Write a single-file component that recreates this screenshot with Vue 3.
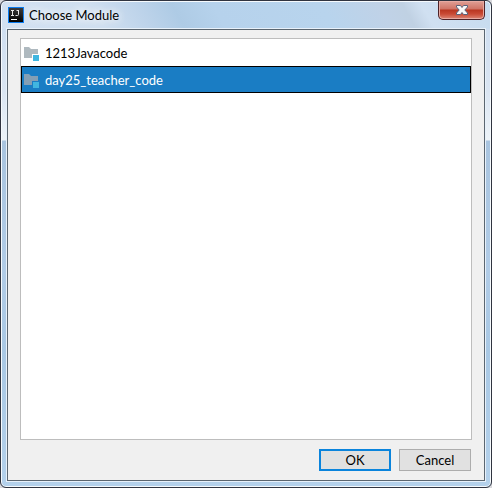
<script setup>
import { ref } from 'vue'

const modules = ['1213Javacode', 'day25_teacher_code']
const selected = ref('day25_teacher_code')
</script>

<template>
  <div class="window" role="dialog" aria-labelledby="dialog-title">
    <header class="titlebar">
      <svg class="app-icon" viewBox="0 0 16 16" aria-hidden="true">
        <defs>
          <linearGradient id="app-bg" x1="0" y1="0" x2="0" y2="1">
            <stop offset="0" stop-color="#3a3a3a" />
            <stop offset="1" stop-color="#000" />
          </linearGradient>
        </defs>
        <rect width="16" height="16" fill="#0a7cf0" />
        <rect x="1" y="1" width="14" height="14" fill="url(#app-bg)" />
        <path d="M3 3.5h3M4.500 3v5M3 8.500h3M8.500 3.500h2M10.500 3v4.500q0 1-1 1H7.500" fill="none" stroke="#e8e8e8" stroke-width="1" />
        <path d="M3 12h6v1H3z" fill="#fff" />
      </svg>
      <h1 id="dialog-title" class="title">Choose Module</h1>
      <button class="close" type="button" aria-label="Close">
        <svg viewBox="0 0 14 12" aria-hidden="true">
          <path d="M1.500 1.500h4L7 3.500l1.500-2h4v1.500L9.800 6l2.700 3v1.500h-4L7 8.500l-1.500 2h-4V9L4.200 6 1.500 3z" fill="#f8f8f8" stroke="#59627a" stroke-width="1" />
        </svg>
      </button>
    </header>

    <main class="client">
      <ul class="list" role="listbox" aria-label="Modules">
        <li
          v-for="name in modules"
          :key="name"
          class="row"
          :class="{ selected: name === selected }"
          role="option"
          :aria-selected="name === selected"
          @click="selected = name"
        >
          <svg class="folder" viewBox="0 0 16 16" aria-hidden="true">
            <path class="folder-body" d="M1 2h5l2 2h7v5H9v4H1z" />
            <path d="M10 10h6v6h-6z" fill="#40b6e0" />
          </svg>
          <span>{{ name }}</span>
        </li>
      </ul>
      <footer class="actions">
        <button class="button primary" type="button">OK</button>
        <button class="button" type="button">Cancel</button>
      </footer>
    </main>
  </div>
</template>

<style>
body {
  margin: 0;
  background: #d8d8dc;
}
</style>

<style scoped>
.window {
  box-sizing: border-box;
  display: flex;
  flex-direction: column;
  min-height: 100vh;
  padding: 0 6px 6px;
  border: 1px solid #303440;
  border-radius: 6px;
  box-shadow: inset 0 0 0 1px #f6fafd;
  background:
    linear-gradient(60deg, #d3e1f1 0, #cfdff0 90px, #bdd3ea 130px, #aecbe5 160px, #b6d2ec 195px, #b8d4ed 290px, #c0d2e7 340px, #c0d1e3 360px, #d0e0f1 376px, #c6dbef 100%) 0 0 / 100% 28px no-repeat,
    linear-gradient(#cbdcf0 0, #dae5f2 90px, #edf3f8 139px, #a9c4df 140px, #b1cce7 270px, #a9c8e4 350px, #b4d1eb 100%);
  font-family: Lato, "Noto Sans", sans-serif;
  font-size: 13px;
  line-height: 18px;
  color: #000;
}

.titlebar {
  display: flex;
  align-items: center;
  height: 28px;
  padding-left: 1px;
}

.app-icon {
  flex: none;
  width: 16px;
  height: 16px;
}

.title {
  flex: 1;
  margin: 0 0 0 5px;
  font-size: 13px;
  line-height: 18px;
  font-weight: 400;
  text-shadow: 0 0 8px #fff, 0 0 10px #fff;
}

.close {
  display: flex;
  align-self: flex-start;
  align-items: center;
  justify-content: center;
  box-sizing: border-box;
  width: 47px;
  height: 19px;
  margin: 0;
  padding: 0;
  border: 1px solid #4d2227;
  border-top: 0;
  border-radius: 0 0 5px 5px;
  box-shadow: inset 0 0 0 1px #e7aaa2;
  background: linear-gradient(#e0a096 0, #cf7466 8px, #b93621 9px, #c94a35 13px, #dc8675 100%);
}

.close svg {
  width: 14px;
  height: 12px;
}

.client {
  display: flex;
  flex: 1;
  flex-direction: column;
  gap: 9px;
  padding: 8px 12px 9px;
  border: 1px solid #5b6670;
  box-shadow: 0 0 0 1px #e8f1fa;
  background: #f0f0f0;
}

.list {
  flex: 1;
  margin: 0;
  padding: 0;
  border: 1px solid #bdbdbd;
  background: #fff;
  list-style: none;
}

.row {
  display: flex;
  align-items: center;
  gap: 6px;
  box-sizing: border-box;
  height: 27px;
  padding: 0 1px;
  border: 1px solid transparent;
}

.row.selected {
  border-color: #000;
  background: #1a7dc4;
  color: #fff;
}

.folder {
  width: 16px;
  height: 16px;
}

.folder-body {
  fill: #afb9bf;
}

.selected .folder-body {
  fill: #849fb5;
}

.actions {
  display: flex;
  justify-content: flex-end;
  gap: 8px;
  padding-right: 1px;
}

.button {
  box-sizing: border-box;
  width: 72px;
  height: 22px;
  padding: 0;
  border: 1px solid #adadad;
  background: #e1e1e1;
  color: #000;
  font: inherit;
}

.button.primary {
  border: 2px solid #0a84dc;
}
</style>
